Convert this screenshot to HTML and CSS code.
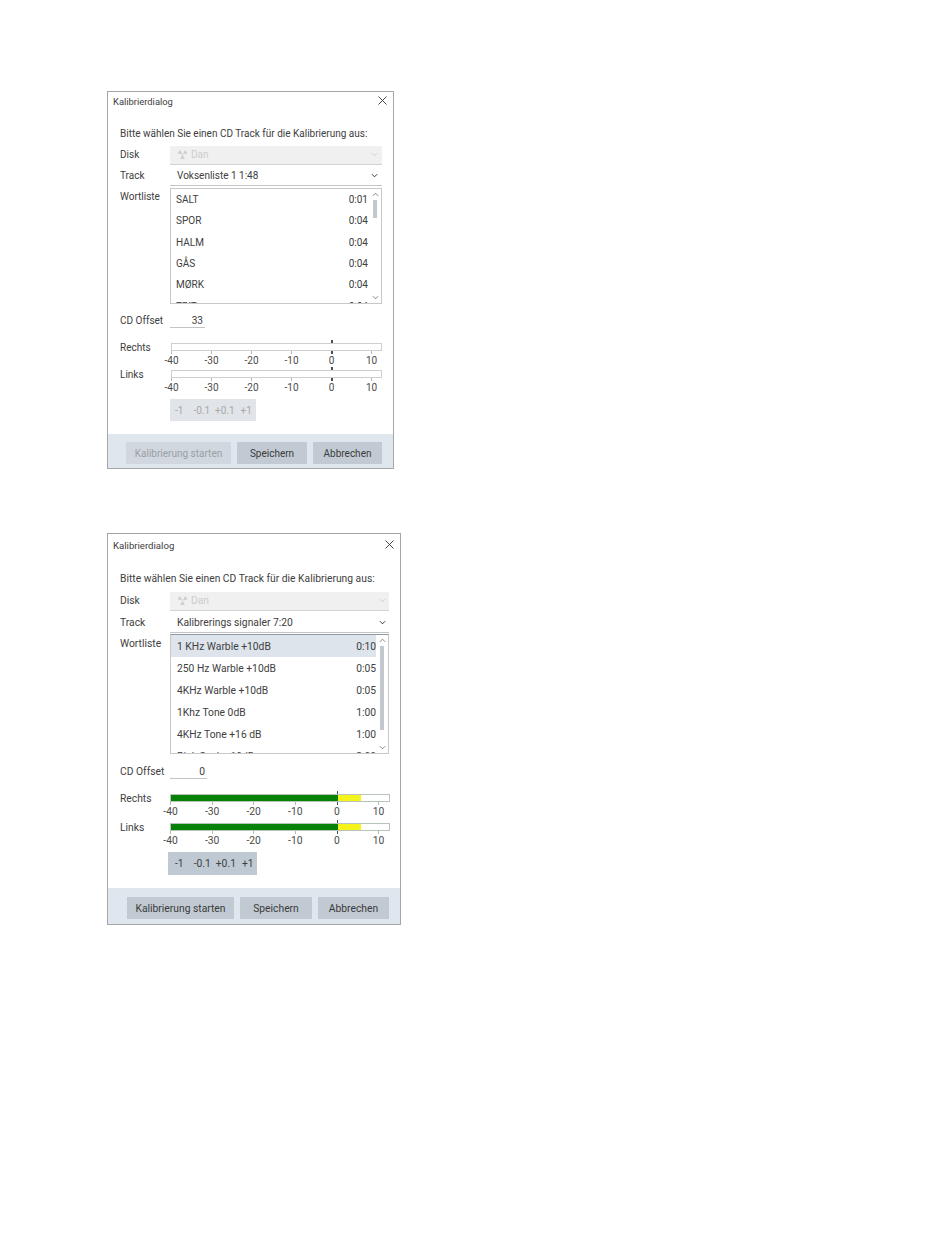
FILE: index.html
```html
<!DOCTYPE html>
<html lang="de">
<head>
<meta charset="utf-8">
<title>Kalibrierdialog</title>
<link rel="stylesheet" href="styles.css">
</head>
<body>
<main class="page">

<section class="dialog dialog-a">
  <header class="titlebar">
    <span class="title">Kalibrierdialog</span>
    <svg class="close" viewBox="0 0 9 9"><path d="M.5.5l8 8M8.5.5l-8 8"/></svg>
  </header>
  <p class="intro">Bitte wählen Sie einen CD Track für die Kalibrierung aus:</p>
  <div class="row row-disk">
    <span class="label">Disk</span>
    <div class="select select-off">
      <svg class="disc" viewBox="0 0 12 12"><path d="M6 6L3.5 1 .5 4.5zM6 6l5.5-1L9 1zM6 6l-2.5 5h5z"/></svg>
      <span>Dan</span>
      <svg class="chev" viewBox="0 0 8 5"><path d="M1 1l3 3 3-3"/></svg>
    </div>
  </div>
  <div class="row row-track">
    <span class="label">Track</span>
    <div class="select">
      <span>Voksenliste 1 1:48</span>
      <svg class="chev" viewBox="0 0 8 5"><path d="M1 1l3 3 3-3"/></svg>
    </div>
  </div>
  <div class="row row-list">
    <span class="label">Wortliste</span>
    <div class="list">
      <ul class="items">
        <li class="item"><span>SALT</span><span>0:01</span></li>
        <li class="item"><span>SPOR</span><span>0:04</span></li>
        <li class="item"><span>HALM</span><span>0:04</span></li>
        <li class="item"><span>GÅS</span><span>0:04</span></li>
        <li class="item"><span>MØRK</span><span>0:04</span></li>
        <li class="item"><span>TRIT</span><span>0:04</span></li>
      </ul>
      <div class="scrollbar">
        <svg class="arrow" viewBox="0 0 8 5"><path d="M1 4l3-3 3 3"/></svg>
        <div class="thumb-track"><div class="thumb"></div></div>
        <svg class="arrow" viewBox="0 0 8 5"><path d="M1 1l3 3 3-3"/></svg>
      </div>
    </div>
  </div>
  <div class="row row-offset">
    <span class="label">CD Offset</span>
    <span class="offset">33</span>
  </div>
  <div class="meter">
    <span class="label">Rechts</span>
    <div class="gauge">
      <div class="mark"></div>
      <div class="bar"></div>
      <div class="mark"></div>
      <div class="scale">
        <div class="cell"><span>-40</span></div><div class="cell"><span>-30</span></div><div class="cell"><span>-20</span></div><div class="cell"><span>-10</span></div><div class="cell cell-zero"><span>0</span></div><div class="cell"><span>10</span></div>
      </div>
    </div>
  </div>
  <div class="meter">
    <span class="label">Links</span>
    <div class="gauge">
      <div class="mark"></div>
      <div class="bar"></div>
      <div class="mark"></div>
      <div class="scale">
        <div class="cell"><span>-40</span></div><div class="cell"><span>-30</span></div><div class="cell"><span>-20</span></div><div class="cell"><span>-10</span></div><div class="cell cell-zero"><span>0</span></div><div class="cell"><span>10</span></div>
      </div>
    </div>
  </div>
  <div class="steps steps-off"><span>-1</span><span>-0.1</span><span>+0.1</span><span>+1</span></div>
  <footer class="footer">
    <button class="btn btn-start" disabled>Kalibrierung starten</button>
    <button class="btn btn-save">Speichern</button>
    <button class="btn btn-cancel">Abbrechen</button>
  </footer>
</section>

<section class="dialog dialog-b">
  <header class="titlebar">
    <span class="title">Kalibrierdialog</span>
    <svg class="close" viewBox="0 0 9 9"><path d="M.5.5l8 8M8.5.5l-8 8"/></svg>
  </header>
  <p class="intro">Bitte wählen Sie einen CD Track für die Kalibrierung aus:</p>
  <div class="row row-disk">
    <span class="label">Disk</span>
    <div class="select select-off">
      <svg class="disc" viewBox="0 0 12 12"><path d="M6 6L3.5 1 .5 4.5zM6 6l5.5-1L9 1zM6 6l-2.5 5h5z"/></svg>
      <span>Dan</span>
      <svg class="chev" viewBox="0 0 8 5"><path d="M1 1l3 3 3-3"/></svg>
    </div>
  </div>
  <div class="row row-track">
    <span class="label">Track</span>
    <div class="select">
      <span>Kalibrerings signaler 7:20</span>
      <svg class="chev" viewBox="0 0 8 5"><path d="M1 1l3 3 3-3"/></svg>
    </div>
  </div>
  <div class="row row-list">
    <span class="label">Wortliste</span>
    <div class="list">
      <ul class="items">
        <li class="item item-on"><span>1 KHz Warble +10dB</span><span>0:10</span></li>
        <li class="item"><span>250 Hz Warble +10dB</span><span>0:05</span></li>
        <li class="item"><span>4KHz Warble +10dB</span><span>0:05</span></li>
        <li class="item"><span>1Khz Tone 0dB</span><span>1:00</span></li>
        <li class="item"><span>4KHz Tone +16 dB</span><span>1:00</span></li>
        <li class="item"><span>Pink Spek +10dB</span><span>3:00</span></li>
      </ul>
      <div class="scrollbar">
        <svg class="arrow" viewBox="0 0 8 5"><path d="M1 4l3-3 3 3"/></svg>
        <div class="thumb-track"><div class="thumb"></div></div>
        <svg class="arrow" viewBox="0 0 8 5"><path d="M1 1l3 3 3-3"/></svg>
      </div>
    </div>
  </div>
  <div class="row row-offset">
    <span class="label">CD Offset</span>
    <span class="offset">0</span>
  </div>
  <div class="meter">
    <span class="label">Rechts</span>
    <div class="gauge">
      <div class="mark"></div>
      <div class="bar"><div class="fill-green"></div><div class="fill-yellow"></div></div>
      <div class="mark"></div>
      <div class="scale">
        <div class="cell"><span>-40</span></div><div class="cell"><span>-30</span></div><div class="cell"><span>-20</span></div><div class="cell"><span>-10</span></div><div class="cell cell-zero"><span>0</span></div><div class="cell"><span>10</span></div>
      </div>
    </div>
  </div>
  <div class="meter">
    <span class="label">Links</span>
    <div class="gauge">
      <div class="mark"></div>
      <div class="bar"><div class="fill-green"></div><div class="fill-yellow"></div></div>
      <div class="mark"></div>
      <div class="scale">
        <div class="cell"><span>-40</span></div><div class="cell"><span>-30</span></div><div class="cell"><span>-20</span></div><div class="cell"><span>-10</span></div><div class="cell cell-zero"><span>0</span></div><div class="cell"><span>10</span></div>
      </div>
    </div>
  </div>
  <div class="steps"><span>-1</span><span>-0.1</span><span>+0.1</span><span>+1</span></div>
  <footer class="footer">
    <button class="btn btn-start">Kalibrierung starten</button>
    <button class="btn btn-save">Speichern</button>
    <button class="btn btn-cancel">Abbrechen</button>
  </footer>
</section>

</main>
</body>
</html>
```
FILE: styles.css
```css
* { box-sizing: border-box; }
html, body { margin: 0; padding: 0; background: #fff; }
body { font-family: Roboto, "Noto Sans", sans-serif; color: #404040; }
.page { padding: 91px 0 0 107px; display: flex; flex-direction: column; align-items: flex-start; gap: 64px; }

.dialog { border: 1px solid #a6a6a6; background: #fff; display: flex; flex-direction: column; font-size: var(--fs); }
.dialog-a {
  width: 287px; height: 378px; --fs: 10px; --title-fs: 9.4px;
  --title-h: 18px; --intro-m: 16px; --disk-m: 4px; --disk-h: 19px; --track-h: 21px; --track-p: 0px; --list-m: 2px; --list-h: 116px;
  --row-h: 21.3px; --off-m: 8px; --off-w: 35px; --meter-m: 12px; --meter-h: 27px; --step: 40px; --bar-left: 1px;
  --steps-m: 5px; --steps-h: 22px; --steps-w: 86px; --steps-x: 0px; --steps-p: 5px; --footer-m: 13px; --footer-h: 34px; --footer-p: 8px;
  --btn1: 105px; --btn2: 70px; --btn3: 69px; --thumb-m: 3px; --thumb-h: 18px; --zero: 160px; --wl: 1px; --chev-r: 4px; --item-r: 1px; --item-l: 5px;
}
.dialog-b {
  width: 294px; height: 392px; --fs: 10.3px; --title-fs: 9.6px;
  --title-h: 22px; --intro-m: 15px; --disk-m: 5px; --disk-h: 19px; --track-h: 22px; --track-p: 1px; --list-m: 1px; --list-h: 120px;
  --row-h: 22px; --off-m: 9px; --off-w: 37px; --meter-m: 12px; --meter-h: 29px; --step: 41.6px; --bar-left: 0px;
  --steps-m: 3px; --steps-h: 23px; --steps-w: 89px; --steps-x: -2px; --steps-p: 7px; --footer-m: 13px; --footer-h: 36px; --footer-p: 9px;
  --btn1: 107px; --btn2: 72px; --btn3: 71px; --thumb-m: 3px; --thumb-h: 84px; --zero: 166.5px; --wl: 2px; --chev-r: 3px; --item-r: 0px; --item-l: 6px;
}

.titlebar { height: var(--title-h); flex: none; display: flex; align-items: center; justify-content: space-between; padding: 0 6px 0 5px; }
.title { font-size: var(--title-fs); }
.close { width: 9px; height: 9px; fill: none; stroke: #333; stroke-width: .9; margin-top: -2px; }

.intro { margin: var(--intro-m) 0 0 12px; height: 16px; line-height: 16px; white-space: nowrap; flex: none; }

.row { display: flex; padding: 0 11px 0 12px; flex: none; }
.label { width: 50px; flex: none; line-height: 16px; }
.row-disk { margin-top: var(--disk-m); height: var(--disk-h); align-items: center; }
.row-disk .label { margin-top: -2px; }
.row-track { height: var(--track-h); align-items: center; }
.row-track .label { margin-top: var(--track-p); }
.row-list { margin-top: var(--list-m); height: var(--list-h); }
.row-list .label { margin-top: var(--wl); }
.row-offset { margin-top: var(--off-m); height: 16px; align-items: center; }
.row-offset .label { margin-top: 1px; }

.select { flex: 1; align-self: stretch; display: flex; align-items: center; padding: var(--track-p) var(--chev-r) 0 7px; border-bottom: 1px solid #c4c4c4; gap: 3px; }
.select span { flex: 1; }
.select-off { background: #f0f0f0; color: #cdcdcd; border-bottom-color: #d4d4d4; padding-top: 0; padding-bottom: 2px; }
.disc { width: 11px; height: 11px; flex: none; fill: #cfcfcf; }
.chev { width: 7px; height: 5px; flex: none; fill: none; stroke: #333; stroke-width: 1.1; }
.select-off .chev { stroke: #cfcfcf; }

.list { flex: 1; display: flex; border: 1px solid #c8c8c8; overflow: hidden; }
.dialog-b .list { border-top-color: #8e99a5; }
.items { flex: 1; margin: 0; padding: 0; list-style: none; min-width: 0; }
.item { height: var(--row-h); display: flex; align-items: center; justify-content: space-between; padding: 0 var(--item-r) 0 var(--item-l); }
.item-on { background: #dde4ec; }

.scrollbar { width: 12px; flex: none; display: flex; flex-direction: column; align-items: center; padding: 3px 0; }
.arrow { width: 7px; height: 5px; flex: none; fill: none; stroke: #666; stroke-width: .9; }
.thumb-track { flex: 1; }
.thumb { width: 4px; height: var(--thumb-h); margin-top: var(--thumb-m); background: #c2c8ce; }

.offset { width: var(--off-w); height: 16px; line-height: 17px; text-align: right; padding-right: 2px; border-bottom: 1px solid #c4c4c4; }

.meter { display: flex; padding-left: 12px; height: var(--meter-h); flex: none; }
.row-offset + .meter { margin-top: var(--meter-m); }
.gauge { margin-left: var(--bar-left); width: 211px; }
.dialog-b .gauge { width: 220px; }
.mark { width: 1.5px; height: 3px; margin-left: var(--zero); background: #44505c; }
.bar { height: 8px; border: 1px solid #cfcfcf; display: flex; }
.dialog-b .bar { border-color: #b9c4b9; }
.fill-green { width: 167px; background: #078107; }
.fill-yellow { width: 23px; background: #f4f41c; }
.scale { display: flex; margin-top: -3px; }
.cell { width: var(--step); flex: none; height: 16px; line-height: 12px; font-size: var(--fs); color: #4a4a4a; }
.cell::before { content: ""; display: block; width: 1px; height: 3px; margin-bottom: 1px; background: #b8b8b8; }
.cell span { display: inline-block; transform: translateX(-50%); margin-left: .5px; }
.cell-zero::before { background: transparent; }

.steps { flex: none; margin: var(--steps-m) 0 0 calc(62px + var(--steps-x)); width: var(--steps-w); height: var(--steps-h); background: #bfc9d3; display: flex; align-items: center; gap: 5px; padding-left: var(--steps-p); }
.steps span:first-child { margin-right: 5px; }
.steps span:nth-child(3) { margin-right: 1px; }
.steps-off { background: #e1e4e8; color: #a9a9a9; }

.footer { margin-top: var(--footer-m); height: var(--footer-h); flex: none; background: #dfe6ee; display: flex; align-items: flex-start; justify-content: flex-end; gap: 6px; padding: var(--footer-p) 11px 0; }
.btn { height: 22px; border: 0; padding: 0; background: #c1cad3; color: #3a3a3a; font: inherit; white-space: nowrap; }
.btn-start { width: var(--btn1); }
.btn-save { width: var(--btn2); }
.btn-cancel { width: var(--btn3); }
.btn:disabled { background: #d0d7df; color: #9aa0a6; }
```
